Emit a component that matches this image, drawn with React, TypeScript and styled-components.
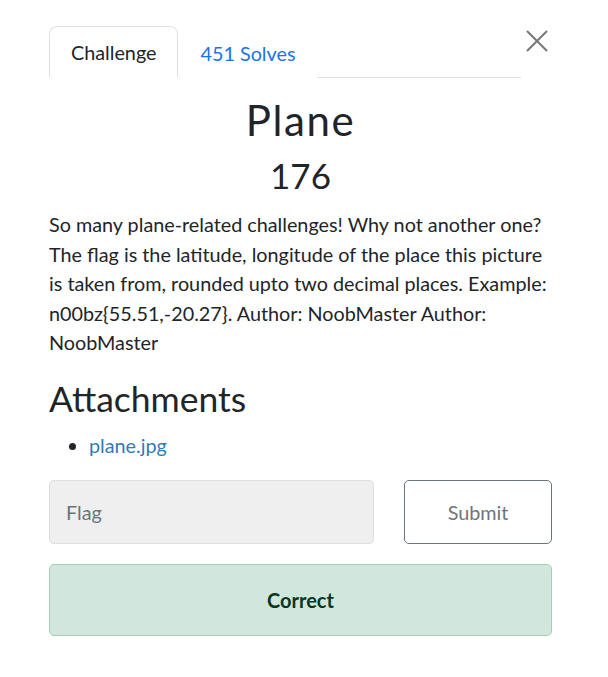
import React from "react";
import styled, { createGlobalStyle } from "styled-components";

const Global = createGlobalStyle`
  html, body { margin: 0; padding: 0; background: #fff; }
  body { font-family: Lato, "Open Sans", sans-serif; color: #212529; }
  * { box-sizing: border-box; }
`;

const Modal = styled.div`
  width: 503px;
  margin: 26px 0 0 49px;
  display: flex;
  flex-direction: column;
`;

const Header = styled.div`
  display: flex;
  align-items: flex-start;
`;

const Tabs = styled.div`
  flex: 1;
  display: flex;
  border-bottom: 1px solid #dee2e6;
  height: 52px;
`;

const Tab = styled.div<{ $active?: boolean }>`
  padding: 0 21px;
  height: 52px;
  display: flex;
  align-items: center;
  font-size: 19.8px;
  color: ${(p) => (p.$active ? "#212529" : "#1a73e8")};
  border: 1px solid ${(p) => (p.$active ? "#dee2e6" : "transparent")};
  border-bottom: ${(p) => (p.$active ? "1px solid #fff" : "none")};
  border-radius: 8px 8px 0 0;
  background: #fff;
  margin-bottom: -1px;
`;

const Close = styled.button`
  width: 30px;
  height: 30px;
  border: none;
  background: none;
  padding: 0;
  margin-left: 1px;
  display: flex;
  align-items: center;
  justify-content: flex-start;
  padding-left: 4px;
  cursor: pointer;
`;

const Title = styled.h2`
  margin: 17px 0 0;
  text-align: center;
  font-size: 42px;
  font-weight: 400;
  letter-spacing: 1.6px;
  line-height: 1.2;
`;

const Points = styled.h3`
  margin: 9px 0 0;
  text-align: center;
  font-size: 35px;
  font-weight: 400;
  line-height: 1.2;
`;

const Description = styled.p`
  margin: 14px 0 0;
  font-size: 19.8px;
  line-height: 29.5px;
`;

const SectionTitle = styled.h3`
  margin: 20px 0 0;
  font-size: 35.5px;
  font-weight: 400;
  line-height: 1.2;
`;

const List = styled.ul`
  margin: 11px 0 0;
  padding-left: 40px;
  font-size: 19.8px;
  line-height: 1.5;
`;

const Link = styled.a`
  color: #337ab7;
  text-decoration: none;
`;

const FormRow = styled.div`
  margin-top: 19px;
  display: grid;
  grid-template-columns: 325px 148px;
  justify-content: space-between;
`;

const FlagInput = styled.input`
  height: 64px;
  border: 1px solid #dedede;
  background: #efefef;
  border-radius: 5px;
  padding: 0 16px;
  font-family: inherit;
  font-size: 19.8px;
  color: #212529;
  &::placeholder { color: #6c757d; }
`;

const SubmitButton = styled.button`
  height: 64px;
  border: 1px solid #6c757d;
  background: #fff;
  border-radius: 5px;
  font-family: inherit;
  font-size: 19.8px;
  color: #6c757d;
`;

const Alert = styled.div`
  margin-top: 20px;
  height: 72px;
  border: 1px solid #a3cfbb;
  background: #d1e7dd;
  border-radius: 5px;
  display: flex;
  align-items: center;
  justify-content: center;
  font-size: 20px;
  font-weight: 700;
  color: #0a3622;
`;

const description =
  "So many plane-related challenges! Why not another one? The flag is the latitude, longitude of the place this picture is taken from, rounded upto two decimal places. Example: n00bz{55.51,-20.27}. Author: NoobMaster Author: NoobMaster";

export default function App() {
  return (
    <>
      <Global />
      <Modal>
        <Header>
          <Tabs>
            <Tab $active>Challenge</Tab>
            <Tab>451 Solves</Tab>
          </Tabs>
          <Close aria-label="Close">
            <svg width="22" height="22" viewBox="0 0 22 22">
              <path d="M1 1L21 21M21 1L1 21" stroke="#777" strokeWidth="2" />
            </svg>
          </Close>
        </Header>
        <Title>Plane</Title>
        <Points>176</Points>
        <Description>{description}</Description>
        <SectionTitle>Attachments</SectionTitle>
        <List>
          <li>
            <Link href="#">plane.jpg</Link>
          </li>
        </List>
        <FormRow>
          <FlagInput placeholder="Flag" />
          <SubmitButton>Submit</SubmitButton>
        </FormRow>
        <Alert>Correct</Alert>
      </Modal>
    </>
  );
}
